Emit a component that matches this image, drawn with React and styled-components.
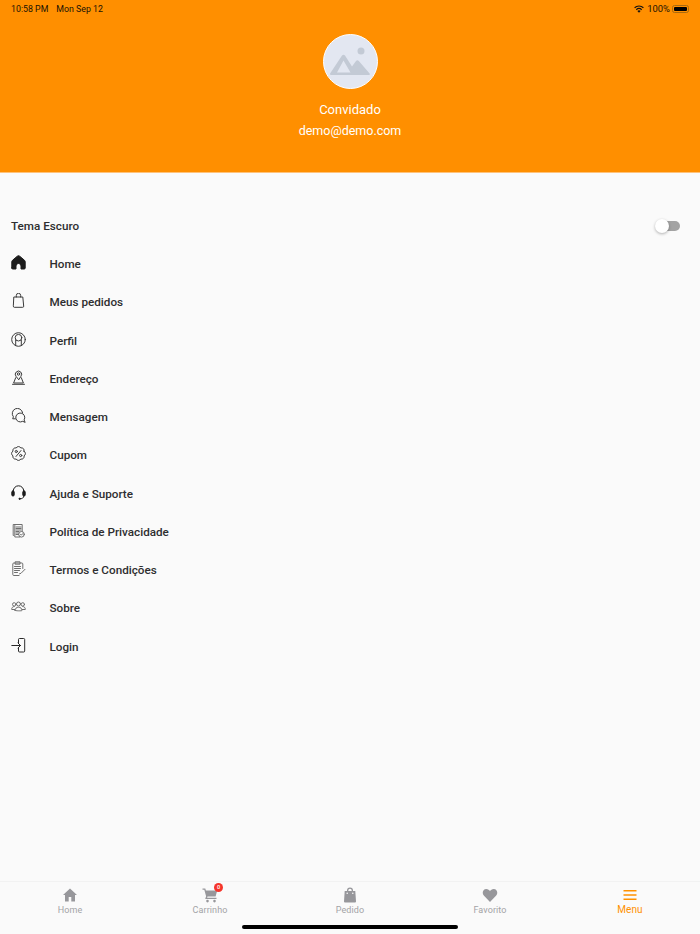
import React from "react";
import styled, { createGlobalStyle } from "styled-components";

const GlobalStyle = createGlobalStyle`
  html, body {
    margin: 0;
    padding: 0;
    background: #fafafa;
  }
  * {
    box-sizing: border-box;
  }
`;

const Page = styled.div`
  width: 700px;
  height: 934px;
  display: flex;
  flex-direction: column;
  background: #fafafa;
  font-family: Roboto, "Noto Sans", sans-serif;
  overflow: hidden;
`;

const Header = styled.header`
  height: 173px;
  flex-shrink: 0;
  background: #ff8f00;
  border-bottom: 1px solid #ffc27a;
  display: flex;
  flex-direction: column;
  align-items: center;
`;

const StatusBar = styled.div`
  width: 100%;
  height: 17px;
  padding: 0 11px;
  display: flex;
  align-items: center;
  justify-content: space-between;
  color: #1a1204;
`;

const StatusGroup = styled.div`
  display: flex;
  align-items: center;
  gap: ${(p) => p.$gap}px;
  font-size: ${(p) => p.$size}px;
`;

const Battery = styled.div`
  width: 17px;
  height: 8px;
  padding: 1px;
  border: 1px solid #a96a10;
  border-radius: 2.5px;
  margin-left: -1px;
  &::before {
    content: "";
    display: block;
    height: 100%;
    background: #000;
    border-radius: 1px;
  }
`;

const Avatar = styled.div`
  width: 55px;
  height: 55px;
  margin-top: 17px;
  border-radius: 50%;
  border: 1.5px solid #fff;
  background: #e3e7f1;
  display: flex;
  align-items: center;
  justify-content: center;
`;

const Name = styled.div`
  margin-top: 13px;
  color: #fff;
  font-size: 13px;
  line-height: 16px;
`;

const Email = styled.div`
  margin-top: 5px;
  color: #fff;
  font-size: 12.5px;
  line-height: 16px;
`;

const Content = styled.main`
  flex: 1;
  display: flex;
  flex-direction: column;
  padding-top: 33px;
`;

const ThemeRow = styled.div`
  height: 39px;
  padding: 0 20px 0 11px;
  display: flex;
  align-items: center;
  justify-content: space-between;
`;

const RowLabel = styled.span`
  font-size: 11.7px;
  font-weight: 500;
  color: #2e2e30;
`;

const Switch = styled.div`
  position: relative;
  width: 24px;
  height: 10px;
  border-radius: 5px;
  background: #a3a3a3;
  &::before {
    content: "";
    position: absolute;
    left: -1px;
    top: -2px;
    width: 14px;
    height: 14px;
    border-radius: 50%;
    background: #fff;
    box-shadow: 0 1px 3px rgba(0, 0, 0, 0.3);
  }
`;

const Menu = styled.nav`
  display: flex;
  flex-direction: column;
`;

const MenuRow = styled.div`
  height: 38.25px;
  padding-left: 11px;
  display: flex;
  align-items: center;
`;

const MenuIcon = styled.svg`
  width: 15px;
  height: 15px;
  flex-shrink: 0;
  margin-top: -3px;
  margin-right: 23.5px;
  fill: none;
  stroke: ${(p) => p.$tone || "#3a3a3a"};
  stroke-width: 1;
  stroke-linecap: round;
  stroke-linejoin: round;
`;

const TabBar = styled.footer`
  position: relative;
  height: 53px;
  flex-shrink: 0;
  border-top: 1px solid #f2f2f2;
  display: grid;
  grid-template-columns: repeat(5, 140px);
`;

const Tab = styled.div`
  position: relative;
  display: flex;
  flex-direction: column;
  align-items: center;
  padding-top: 5px;
  font-size: ${(p) => (p.$active ? "10px" : "9px")};
  line-height: 11px;
  letter-spacing: 0.1px;
  color: ${(p) => (p.$active ? "#ff9100" : "#a3a3a6")};
`;

const TabIcon = styled.svg`
  width: 16px;
  height: 16px;
  margin-bottom: ${(p) => (p.$active ? 1 : 2)}px;
  fill: ${(p) => (p.$active ? "#ff9100" : "#97979b")};
`;

const Badge = styled.span`
  position: absolute;
  top: 1px;
  left: 74px;
  width: 9px;
  height: 9px;
  border-radius: 50%;
  background: #f5342b;
  color: #fff;
  font-size: 5.5px;
  font-weight: 500;
  line-height: 9px;
  text-align: center;
  letter-spacing: 0;
`;

const HomeIndicator = styled.div`
  position: absolute;
  left: 242px;
  bottom: 5px;
  width: 216px;
  height: 4px;
  border-radius: 2px;
  background: #000;
`;

const menuItems = [
  {
    label: "Home",
    tone: "#1c1c1c",
    icon: (
      <path
        d="M.8 13V6.800c0-.6.3-1.100.7-1.500L6.300 1.200a1.800 1.800 0 0 1 2.400 0l4.800 4.100c.4.4.7.9.700 1.500V13a1 1 0 0 1-1 1H10V11a2.500 2.500 0 0 0-5 0v3H1.800a1 1 0 0 1-1-1z"
        fill="#1c1c1c"
      />
    ),
  },
  {
    label: "Meus pedidos",
    icon: (
      <>
        <path d="M3.200 4h8.600l.9 9.200a1 1 0 0 1-1 1.100H3.300a1 1 0 0 1-1-1.100z" />
        <path d="M5.300 4V2.500a2.200 2.200 0 0 1 4.400 0V4" />
      </>
    ),
  },
  {
    label: "Perfil",
    icon: (
      <>
        <circle cx="7.500" cy="7.500" r="6.800" />
        <circle cx="7.500" cy="5.700" r="3.300" />
        <path d="M4.700 8v5.500M10.300 8v5.500" />
      </>
    ),
  },
  {
    label: "Endereço",
    icon: (
      <>
        <path d="M7.500 9.500L5 6.300a3.200 3.200 0 1 1 5 0z" />
        <circle cx="7.500" cy="4" r="1.200" />
        <path d="M4.700 7.700L2.600 13h9.800l-2.100-5.300" />
        <path d="M1.500 14.300h12" />
      </>
    ),
  },
  {
    label: "Mensagem",
    icon: (
      <>
        <path d="M4.300 10.800H1.700l.7-2A5.200 5.200 0 1 1 11.600 4.700" />
        <path d="M14 14l-.9-2.100A4.500 4.500 0 1 0 11.400 13.500z" />
      </>
    ),
  },
  {
    label: "Cupom",
    icon: (
      <>
        <path d="M13.040 5.200A2.600 2.600 0 0 0 9.800 1.960 2.600 2.600 0 0 0 5.200 1.960 2.600 2.600 0 0 0 1.960 5.200 2.600 2.600 0 0 0 1.960 9.800 2.600 2.600 0 0 0 5.200 13.040 2.600 2.600 0 0 0 9.800 13.040 2.600 2.600 0 0 0 13.040 9.800 2.600 2.600 0 0 0 13.040 5.200z" />
        <path d="M5 10.500l5-6" />
        <circle cx="5.300" cy="5.500" r="1.100" />
        <circle cx="9.700" cy="9.500" r="1.100" />
      </>
    ),
  },
  {
    label: "Ajuda e Suporte",
    tone: "#1c1c1c",
    icon: (
      <>
        <path d="M2.300 7V6a5.200 5.200 0 0 1 10.400 0v1" />
        <rect x="0.800" y="6" width="2.400" height="5" rx="1.100" fill="#1c1c1c" />
        <rect x="11.800" y="6" width="2.400" height="5" rx="1.100" fill="#1c1c1c" />
        <path d="M12.700 11.500c0 1.500-1.600 2.300-3.700 2.300" />
        <circle cx="8.500" cy="13.800" r=".6" fill="#1c1c1c" />
      </>
    ),
  },
  {
    label: "Política de Privacidade",
    tone: "#6e6e6e",
    icon: (
      <>
        <path d="M2.500 12.500h-.3V1.500h9v7" />
        <path d="M3.800 2.500V14h5" />
        <path d="M5 4h5M5 5.500h5M5 7h5M5 8.500h3M5 10h2.500M5 11.500h2.500" />
        <circle cx="10.500" cy="11.300" r="2.800" />
        <path d="M9.500 11.300l.9.900 1.200-1.500" />
      </>
    ),
  },
  {
    label: "Termos e Condições",
    tone: "#6e6e6e",
    icon: (
      <>
        <path d="M8 14.500H2.800a1 1 0 0 1-1-1V3a1 1 0 0 1 1-1h8a1 1 0 0 1 1 1v4.500" />
        <path d="M4.500 .8h4.500v2.400H4.500z" />
        <path d="M3.500 5.500h6M3.500 7.500h6M3.500 9.500h5M3.500 11.500h3" />
        <path d="M8.500 12.800l1.500-.5 4-4" />
      </>
    ),
  },
  {
    label: "Sobre",
    tone: "#6e6e6e",
    icon: (
      <>
        <circle cx="7.500" cy="5" r="2" />
        <circle cx="3.200" cy="5.400" r="1.700" />
        <circle cx="11.800" cy="5.400" r="1.700" />
        <path d="M4 11.500c0-2 1.500-3.300 3.500-3.300s3.500 1.300 3.500 3.300c0 .5-7 .5-7 0z" />
        <path d="M3.800 10.500H.700c-.2-1.700 1-3 2.500-3M11.200 10.500h3.100c.2-1.700-1-3-2.500-3" />
      </>
    ),
  },
  {
    label: "Login",
    tone: "#2a2a2a",
    icon: (
      <>
        <path d="M7.500 5.200V1.500a1 1 0 0 1 1-1h4.200a1 1 0 0 1 1 1v11.500a1 1 0 0 1-1 1H8.500a1 1 0 0 1-1-1V9.800" />
        <path d="M.800 7.500H9.500M7 5l2.500 2.500L7 10" />
      </>
    ),
  },
];

const tabs = [
  { label: "Home", path: "M8 1.500L1 8h2v6.500h3.700V10h2.600v4.500H13V8h2z" },
  {
    label: "Carrinho",
    path: "M.5 1.500h2.800l.6 2h11.300l-1.600 6H5.500l-.4 1.200h9.400v1.300H3.200l.9-2.700L2.300 2.800H.5zM5.500 12.800a1.300 1.300 0 1 1 0 2.600 1.300 1.300 0 0 1 0-2.600zM12.500 12.800a1.300 1.300 0 1 1 0 2.600 1.300 1.300 0 0 1 0-2.600z",
    badge: "0",
  },
  {
    label: "Pedido",
    path: "M5 4V3.500a3 3 0 0 1 6 0V4h2.300l.7 10.500a1 1 0 0 1-1 1H3a1 1 0 0 1-1-1L2.700 4zM6.300 4h3.400v-.5a1.700 1.700 0 0 0-3.400 0zM5.200 5.500a.8.8 0 1 0 0 1.600.8.8 0 0 0 0-1.600zM10.800 5.500a.8.8 0 1 0 0 1.600.8.8 0 0 0 0-1.600z",
  },
  {
    label: "Favorito",
    path: "M8 15L1.800 8.600C-.2 6.500.6 2 4.300 2 6 2 7.300 3 8 4.200 8.700 3 10 2 11.700 2c3.700 0 4.500 4.500 2.500 6.600z",
  },
  {
    label: "Menu",
    path: "M1.500 3h13v1.500h-13zM1.500 7.300h13v1.500h-13zM1.500 11.600h13v1.500h-13z",
    active: true,
  },
];

function App() {
  return (
    <Page>
      <GlobalStyle />
      <Header>
        <StatusBar>
          <StatusGroup $gap={8} $size={8.8}>
            <span>10:58 PM</span>
            <span>Mon Sep 12</span>
          </StatusGroup>
          <StatusGroup $gap={3} $size={9.4}>
            <svg width="10" height="8" viewBox="0 0 10 8">
              <path d="M5 7.800L3.400 5.900a2.400 2.400 0 0 1 3.200 0z" fill="#111" />
              <path d="M2.300 4.700a4 4 0 0 1 5.400 0M.6 2.700a6.500 6.500 0 0 1 8.800 0" fill="none" stroke="#111" strokeWidth="1.200" />
            </svg>
            <span>100%</span>
            <Battery />
          </StatusGroup>
        </StatusBar>
        <Avatar>
          <svg width="42" height="30" viewBox="0 0 42 30">
            <circle cx="32" cy="4" r="3.500" fill="#c3cad5" />
            <path
              fillRule="evenodd"
              d="M13 8.500a2 2 0 0 1 3 0l7 11 4-5.500a1.800 1.800 0 0 1 2.800 0l10.600 12.200a1 1 0 0 1-.8 1.800H2a1 1 0 0 1-.9-1.500zM14.500 13.500L8 25.500h13.500z"
              fill="#c3cad5"
            />
          </svg>
        </Avatar>
        <Name>Convidado</Name>
        <Email>demo@demo.com</Email>
      </Header>
      <Content>
        <ThemeRow>
          <RowLabel>Tema Escuro</RowLabel>
          <Switch />
        </ThemeRow>
        <Menu>
          {menuItems.map((item) => (
            <MenuRow key={item.label}>
              <MenuIcon viewBox="0 0 15 15" $tone={item.tone}>
                {item.icon}
              </MenuIcon>
              <RowLabel>{item.label}</RowLabel>
            </MenuRow>
          ))}
        </Menu>
      </Content>
      <TabBar>
        {tabs.map((tab) => (
          <Tab key={tab.label} $active={tab.active}>
            <TabIcon viewBox="0 0 16 16" $active={tab.active}>
              <path fillRule="evenodd" d={tab.path} />
            </TabIcon>
            {tab.label}
            {tab.badge && <Badge>{tab.badge}</Badge>}
          </Tab>
        ))}
        <HomeIndicator />
      </TabBar>
    </Page>
  );
}

export default App;
